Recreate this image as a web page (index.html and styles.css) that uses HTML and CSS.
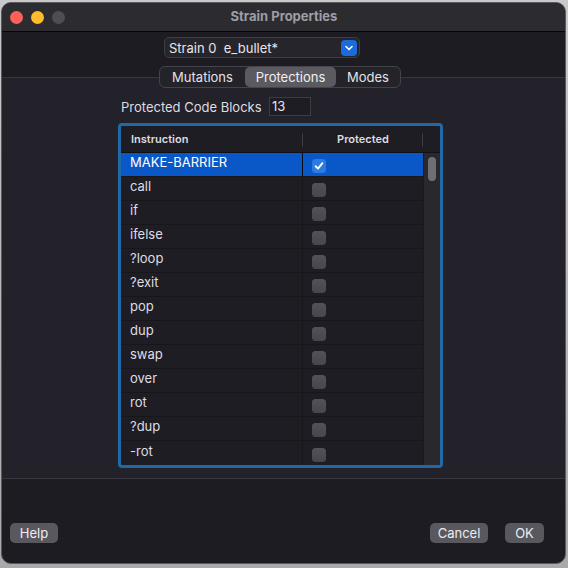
FILE: index.html
```html
<!DOCTYPE html>
<html>
<head>
<meta charset="utf-8">
<link rel="stylesheet" href="styles.css">
</head>
<body>
<div class="window">
  <div class="titlebar">
    <div class="lights">
      <span class="light red"></span>
      <span class="light yellow"></span>
      <span class="light gray"></span>
    </div>
    <div class="title">Strain Properties</div>
  </div>
  <div class="content">
    <div class="popup-row">
      <div class="popup">
        <span class="popup-text">Strain 0&nbsp; e_bullet*</span>
        <span class="popup-arrow">
          <svg width="16" height="16" viewBox="0 0 16 16"><path d="M5 6.5 L8 9.5 L11 6.5" fill="none" stroke="#fff" stroke-width="1.6" stroke-linecap="round" stroke-linejoin="round"/></svg>
        </span>
      </div>
    </div>
    <div class="tabs-row">
      <div class="segmented">
        <span class="seg seg-mut">Mutations</span>
        <span class="seg seg-prot selected">Protections</span>
        <span class="seg seg-modes">Modes</span>
      </div>
    </div>
    <div class="tabbox">
      <div class="field-row">
        <span class="field-label">Protected Code Blocks</span>
        <span class="field">13</span>
      </div>
      <div class="table">
        <div class="table-main">
          <div class="thead">
            <div class="th th-instr">Instruction</div>
            <div class="th th-prot">Protected</div>
          </div>
          <div class="rows">
            <div class="row sel"><div class="c1">MAKE-BARRIER</div><div class="c2"><span class="cb checked"><svg width="14" height="14" viewBox="0 0 14 14"><path d="M3.6 7.3 L6 9.6 L10.4 4.2" fill="none" stroke="#fff" stroke-width="1.9" stroke-linecap="round" stroke-linejoin="round"/></svg></span></div></div>
            <div class="row"><div class="c1">call</div><div class="c2"><span class="cb"></span></div></div>
            <div class="row"><div class="c1">if</div><div class="c2"><span class="cb"></span></div></div>
            <div class="row"><div class="c1">ifelse</div><div class="c2"><span class="cb"></span></div></div>
            <div class="row"><div class="c1">?loop</div><div class="c2"><span class="cb"></span></div></div>
            <div class="row"><div class="c1">?exit</div><div class="c2"><span class="cb"></span></div></div>
            <div class="row"><div class="c1">pop</div><div class="c2"><span class="cb"></span></div></div>
            <div class="row"><div class="c1">dup</div><div class="c2"><span class="cb"></span></div></div>
            <div class="row"><div class="c1">swap</div><div class="c2"><span class="cb"></span></div></div>
            <div class="row"><div class="c1">over</div><div class="c2"><span class="cb"></span></div></div>
            <div class="row"><div class="c1">rot</div><div class="c2"><span class="cb"></span></div></div>
            <div class="row"><div class="c1">?dup</div><div class="c2"><span class="cb"></span></div></div>
            <div class="row"><div class="c1">-rot</div><div class="c2"><span class="cb"></span></div></div>
          </div>
        </div>
        <div class="scroll">
          <div class="scroll-head"></div>
          <div class="scroll-track"><div class="thumb"></div></div>
        </div>
      </div>
    </div>
    <div class="footer">
      <span class="btn btn-help">Help</span>
      <span class="spacer"></span>
      <span class="btn btn-cancel">Cancel</span>
      <span class="btn btn-ok">OK</span>
    </div>
  </div>
</div>
</body>
</html>
```
FILE: styles.css
```css
* { box-sizing: border-box; }
html, body { margin: 0; padding: 0; }
body {
  width: 568px;
  height: 568px;
  background: linear-gradient(#c9c9c9, #a9a9a9);
  padding: 2px 2px 4px 1px;
  font-family: Inter, "Liberation Sans", sans-serif;
  font-size: 13px;
  color: #dedde2;
  overflow: hidden;
}
.window {
  width: 565px;
  height: 562px;
  border-radius: 10px;
  border: 1px solid #5a595e;
  background: #1e1c23;
  overflow: hidden;
  display: flex;
  flex-direction: column;
}
.titlebar {
  height: 29px;
  background: #2c2b30;
  border-bottom: 1px solid #050505;
  display: flex;
  align-items: center;
  flex-shrink: 0;
}
.lights {
  display: flex;
  gap: 8px;
  padding-left: 8px;
  width: 120px;
}
.light { width: 13px; height: 13px; border-radius: 50%; display: block; }
.red { background: #fe5f57; }
.yellow { background: #febc2e; }
.gray { background: #4f4e54; }
.title {
  flex: 1;
  text-align: center;
  font-weight: 700;
  color: #9e9da3;
  font-size: 13px;
  margin-right: 120px;
  margin-left: 1px;
  padding-bottom: 2px;
}
.content {
  flex: 1;
  display: flex;
  flex-direction: column;
}
.popup-row {
  display: flex;
  padding-left: 162px;
  padding-top: 5px;
}
.popup {
  width: 196px;
  height: 21px;
  border: 1px solid #3f3e44;
  border-radius: 5px;
  background: #26252b;
  display: flex;
  align-items: center;
  justify-content: space-between;
  padding: 0 2px 0 4px;
}
.popup-text { color: #e6e5ea; }
.popup-arrow {
  width: 16px;
  height: 16px;
  border-radius: 4px;
  background: #1c6bdd;
  display: flex;
}
.tabs-row {
  display: flex;
  padding-left: 157px;
  padding-top: 8px;
  position: relative;
  z-index: 2;
}
.segmented {
  display: flex;
  height: 22px;
  width: 242px;
  border: 1px solid #45444a;
  border-radius: 6px;
  background: #24232a;
  align-items: stretch;
}
.seg {
  display: flex;
  align-items: center;
  justify-content: center;
  color: #e3e2e7;
  border-radius: 5px;
}
.seg-mut { width: 85px; }
.seg-prot { width: 91px; }
.seg-modes { width: 64px; }
.seg.selected { background: #5b5a60; color: #f0eff4; }
.tabbox {
  margin-top: -11px;
  height: 402px;
  border-top: 1px solid #38373d;
  border-bottom: 1px solid #38373d;
  background: #232129;
  display: flex;
  flex-direction: column;
  padding-left: 116px;
}
.field-row {
  display: flex;
  align-items: center;
  padding-top: 18px;
  padding-left: 3px;
  height: 38px;
}
.field-label { width: 148px; color: #dedde2; padding-top: 1px; }
.field {
  width: 42px;
  height: 19px;
  border: 1px solid #3d3c42;
  background: #1f1d24;
  padding-left: 2px;
  display: flex;
  align-items: center;
  color: #e6e5ea;
}
.table {
  margin-top: 7px;
  width: 325px;
  height: 345px;
  border: 3px solid #1e69a6;
  border-radius: 4px;
  display: flex;
  background: #1f1d24;
}
.table-main { width: 302px; display: flex; flex-direction: column; }
.thead {
  height: 27px;
  display: flex;
  border-bottom: 1px solid #111015;
  font-size: 11px;
  font-weight: 600;
  color: #dcdbe0;
}
.th { display: flex; align-items: center; position: relative; }
.th-instr { width: 182px; padding-left: 10px; }
.th-instr::after, .th-prot::after {
  content: "";
  position: absolute;
  right: 0;
  top: 7px;
  height: 14px;
  width: 1px;
  background: #3c3b40;
}
.th-prot { width: 120px; justify-content: center; }
.rows { display: flex; flex-direction: column; }
.row {
  height: 24px;
  display: flex;
  border-bottom: 1px solid #17161b;
}
.row:last-child { border-bottom: none; }
.c1 {
  width: 182px;
  padding-left: 9px;
  display: flex;
  align-items: center;
  padding-bottom: 5px;
  color: #dedde2;
  border-right: 1px solid #17161b;
}
.c2 {
  width: 120px;
  display: flex;
  align-items: center;
  padding-left: 9px;
  padding-top: 3px;
}
.row.sel { background: #0a58c8; }
.row.sel .c1 { color: #fff; border-right-color: #0a0a12; }
.cb {
  width: 14px;
  height: 14px;
  border-radius: 3.5px;
  background: linear-gradient(#535258, #47464c);
  display: block;
}
.cb.checked {
  background: #2b7be0;
  display: flex;
}
.scroll {
  width: 17px;
  display: flex;
  flex-direction: column;
}
.scroll-head { height: 27px; border-bottom: 1px solid #111015; }
.scroll-track {
  flex: 1;
  background: #29282d;
  border-left: 1px solid #1a191e;
  padding: 4px 0 0 4px;
}
.thumb {
  width: 8px;
  height: 24px;
  border-radius: 4px;
  background: #6f6e73;
}
.footer {
  display: flex;
  align-items: center;
  padding: 44px 21px 0 8px;
}
.spacer { flex: 1; }
.btn {
  height: 20px;
  border-radius: 5px;
  background: #59585e;
  color: #ececf0;
  display: flex;
  align-items: center;
  justify-content: center;
}
.btn-help { width: 48px; }
.btn-cancel { width: 58px; margin-right: 17px; }
.btn-ok { width: 39px; }
```
